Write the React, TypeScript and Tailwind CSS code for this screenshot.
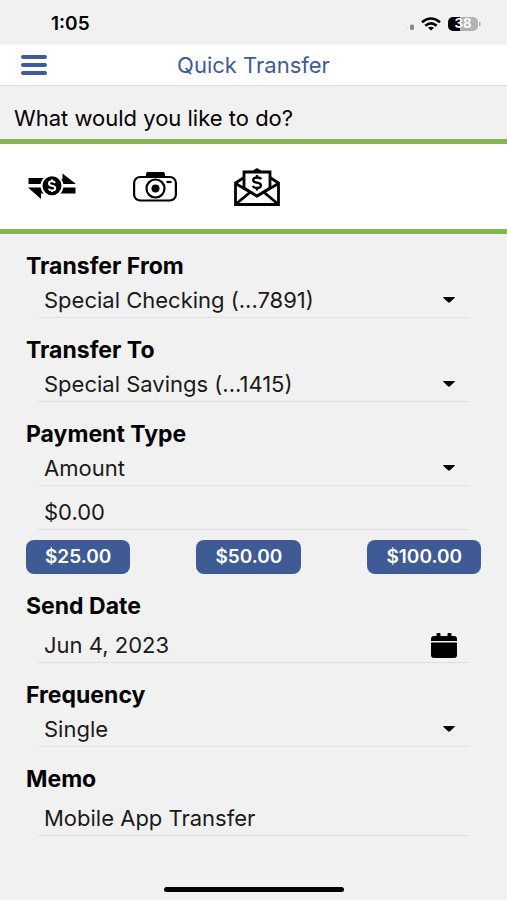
import { useState } from "react";

interface SelectFieldProps {
  id: string;
  label: string;
  options: string[];
}

const labelClass = "block h-8 text-[23px] leading-8 font-bold text-black";
const controlClass =
  "w-full min-w-0 appearance-none bg-transparent text-[22px] leading-7 text-[#1a1a1a] outline-none";

function SelectField({ id, label, options }: SelectFieldProps) {
  return (
    <div>
      <label htmlFor={id} className={labelClass}>
        {label}
      </label>
      <div className="relative mx-3 flex h-9 items-center border-b border-[#dfdfdf] pt-px pl-[6px]">
        <select id={id} className={controlClass}>
          {options.map((option) => (
            <option key={option}>{option}</option>
          ))}
        </select>
        <svg
          viewBox="0 0 12 6"
          className="pointer-events-none absolute right-[14px] h-[6px] w-3"
          aria-hidden="true"
        >
          <path d="M.6 0h10.800q.8.1.3.8L7 5.300q-1 .8-2 0L.3.800Q-.2.1.6 0z" />
        </svg>
      </div>
    </div>
  );
}

function StatusBar() {
  return (
    <div className="flex h-[45px] items-center justify-between pt-[2px] pr-[26px] pl-[51px]">
      <span className="text-[19px] leading-6 font-semibold">1:05</span>
      <div className="flex items-center gap-[7px]">
        <svg viewBox="0 0 8 14" className="h-[14px] w-2" aria-hidden="true">
          <rect x="0" y="10" width="2" height="2" rx="1" fill="#ddd" />
          <rect x="4" y="7.500" width="4" height="5.500" rx="1.500" fill="#888" />
        </svg>
        <svg
          viewBox="0 0 20 14"
          className="h-[14px] w-5"
          fill="none"
          stroke="#000"
          strokeWidth="2.600"
          aria-hidden="true"
        >
          <path d="M1 5.200Q10-2.200 19 5.200" />
          <path d="M4.300 8.700Q10 4 15.700 8.700" />
          <path d="M7 10.800Q10 8.600 13 10.800L10 13.400z" fill="#000" stroke="none" />
        </svg>
        <div className="flex items-center gap-px">
          <div className="flex h-[14px] w-[30px] items-center justify-center rounded-[5px] bg-linear-to-r from-black from-40% to-[#b3b3b3] to-40% text-[13px] leading-none font-bold text-white">
            38
          </div>
          <div className="h-1 w-[2px] rounded-r-full bg-[#b3b3b3]" />
        </div>
      </div>
    </div>
  );
}

function TransferIcon() {
  return (
    <svg viewBox="0 0 48 27" className="h-[27px] w-12" aria-hidden="true">
      <path d="M.5 5H18v6H.5zM0 14.500h18v6h-5V26z" />
      <path d="M30 14.500h17.500v6H30zM30 11V6h4.500V.5L48 11z" />
      <circle cx="24" cy="12.800" r="10.500" stroke="#fff" strokeWidth="2" />
      <path
        d="M27 10Q26.200 8.300 24 8.300q-3 0-3 2.200 0 1.900 3 2.300 3.200.5 3.200 2.400 0 2.200-3.200 2.200-2.500 0-3.300-1.800M24 6.500v1.800M24 17.300v1.800"
        fill="none"
        stroke="#fff"
        strokeWidth="2"
      />
    </svg>
  );
}

function CameraIcon() {
  return (
    <svg
      viewBox="0 0 44 30"
      className="h-[30px] w-11"
      fill="none"
      stroke="#000"
      strokeWidth="2.200"
      aria-hidden="true"
    >
      <rect x="1.100" y="5" width="41.800" height="23.500" rx="6" />
      <path d="M14 4.500V2.500Q14 1 15.500 1h14Q31 1 31 2.500v2z" fill="#000" />
      <circle cx="22.500" cy="16.500" r="9" />
      <circle cx="22.500" cy="16.500" r="4" fill="#000" stroke="none" />
      <path d="M33.500 10h5" />
    </svg>
  );
}

function EnvelopeIcon() {
  return (
    <svg
      viewBox="0 0 46 38"
      className="h-[38px] w-[46px]"
      fill="none"
      stroke="#000"
      strokeWidth="2.800"
      aria-hidden="true"
    >
      <path d="M10 9.500L1.500 15v21.500h43V15L36 9.500" />
      <path d="M1.500 15.500L23 28l21.500-12.500M2 36l15-12.500M44 36L29 23.500" />
      <path d="M10 20V4h26v16l-13 8z" fill="#fff" />
      <path d="M17 4l5-3.500q1-.5 2 0L29 4z" fill="#000" stroke="none" />
      <path
        d="M27 11.200Q26.300 9.500 23 9.500q-3.800 0-3.800 2.500 0 2.200 3.800 2.700 4 .6 4 2.800 0 2.500-4 2.500-3.400 0-4.300-2M23 7v2.500M23 20v2.500"
        strokeWidth="2.300"
      />
    </svg>
  );
}

function CalendarIcon() {
  return (
    <svg viewBox="0 0 26 25" className="h-[25px] w-[26px]" aria-hidden="true">
      <path d="M0 8V6q0-3 3-3h2.500V1q0-1 1-1h2q1 0 1 1v2h7V1q0-1 1-1h2q1 0 1 1v2H23q3 0 3 3v2zM0 9.500h26V22q0 3-3 3H3q-3 0-3-3z" />
    </svg>
  );
}

export default function App() {
  const [amount, setAmount] = useState("$0.00");

  return (
    <div className="flex min-h-screen flex-col bg-[#f1f1f1] font-['Inter',sans-serif] text-black">
      <StatusBar />
      <header className="grid h-[41px] grid-cols-[28px_1fr_28px] items-center border-b border-[#dedede] bg-white px-5">
        <button type="button" aria-label="Menu" className="flex flex-col gap-1 px-px">
          <span className="h-1 w-full rounded-xs bg-[#3f5b99]" />
          <span className="h-1 w-full rounded-xs bg-[#3f5b99]" />
          <span className="h-1 w-full rounded-xs bg-[#3f5b99]" />
        </button>
        <h1 className="text-center text-[22px] leading-7 text-[#3f5b99]">Quick Transfer</h1>
      </header>
      <h2 className="h-[53px] px-[14px] pt-4 text-[22px] leading-8">
        What would you like to do?
      </h2>
      <nav className="flex h-[95px] items-center gap-[57px] border-y-[5px] border-[#84b552] bg-white px-7">
        <button type="button" aria-label="Transfer">
          <TransferIcon />
        </button>
        <button type="button" aria-label="Deposit a check">
          <CameraIcon />
        </button>
        <button type="button" aria-label="Pay by mail">
          <EnvelopeIcon />
        </button>
      </nav>

      <form className="flex-1 px-[26px] pt-4">
        <div className="flex flex-col gap-4">
          <SelectField id="from" label="Transfer From" options={["Special Checking (...7891)"]} />
          <SelectField id="to" label="Transfer To" options={["Special Savings (...1415)"]} />
          <SelectField id="type" label="Payment Type" options={["Amount"]} />
        </div>
        <div className="mx-3 flex h-11 items-center border-b border-[#dfdfdf] pt-2 pl-[6px]">
          <input
            aria-label="Amount"
            className={controlClass}
            value={amount}
            onChange={(e) => setAmount(e.target.value)}
          />
        </div>
        <div className="flex justify-between pt-[10px] pb-4">
          {["$25.00", "$50.00", "$100.00"].map((preset) => (
            <button
              key={preset}
              type="button"
              onClick={() => setAmount(preset)}
              className="h-[34px] rounded-lg bg-[#3f5b95] px-[19px] text-[19px] leading-6 font-semibold text-white"
            >
              {preset}
            </button>
          ))}
        </div>
        <div className="flex flex-col gap-4">
          <div>
            <label htmlFor="date" className={labelClass}>
              Send Date
            </label>
            <div className="mx-3 flex h-[41px] items-center border-b border-[#dfdfdf] pt-[6px] pr-3 pl-[6px]">
              <input id="date" className={controlClass} defaultValue="Jun 4, 2023" />
              <button type="button" aria-label="Pick a date">
                <CalendarIcon />
              </button>
            </div>
          </div>
          <SelectField id="frequency" label="Frequency" options={["Single"]} />
          <div>
            <label htmlFor="memo" className={labelClass}>
              Memo
            </label>
            <div className="mx-3 flex h-[41px] items-center border-b border-[#dfdfdf] pt-[6px] pl-[6px]">
              <input id="memo" className={controlClass} defaultValue="Mobile App Transfer" />
            </div>
          </div>
        </div>
      </form>
      <div className="mx-auto mb-2 h-[5px] w-[180px] rounded-full bg-black" />
    </div>
  );
}
